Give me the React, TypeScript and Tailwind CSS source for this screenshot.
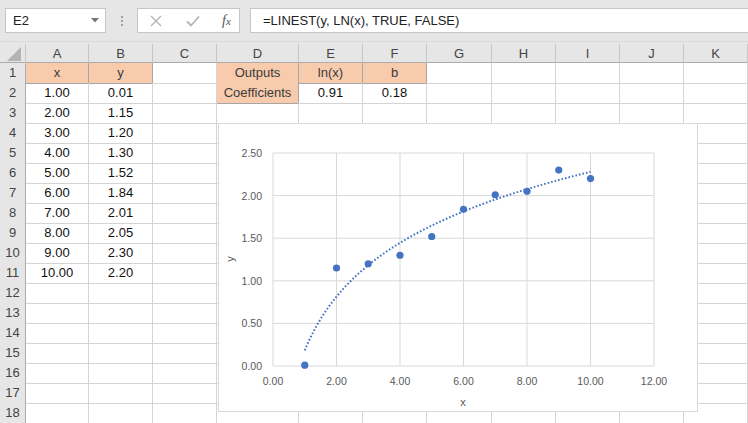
import React from "react";

const COLS = ["A", "B", "C", "D", "E", "F", "G", "H", "I", "J", "K"];
const GRID = "grid grid-cols-[26px_63px_64px_64px_82px_64px_64px_65px_64px_64px_64px_64px]";

type Cell = { t: string; o?: boolean };
const xs = ["1.00", "2.00", "3.00", "4.00", "5.00", "6.00", "7.00", "8.00", "9.00", "10.00"];
const ys = ["0.01", "1.15", "1.20", "1.30", "1.52", "1.84", "2.01", "2.05", "2.30", "2.20"];

function rowData(r: number): Record<number, Cell> {
  const d: Record<number, Cell> = {};
  if (r === 1) {
    d[0] = { t: "x", o: true };
    d[1] = { t: "y", o: true };
    d[3] = { t: "Outputs", o: true };
    d[4] = { t: "ln(x)", o: true };
    d[5] = { t: "b", o: true };
  } else if (r >= 2 && r <= 11) {
    d[0] = { t: xs[r - 2] };
    d[1] = { t: ys[r - 2] };
    if (r === 2) {
      d[3] = { t: "Coefficients", o: true };
      d[4] = { t: "0.91" };
      d[5] = { t: "0.18" };
    }
  }
  return d;
}

const yv = [0.01, 1.15, 1.2, 1.3, 1.52, 1.84, 2.01, 2.05, 2.3, 2.2];
const px = (x: number) => 272 + x * 31.75;
const py = (y: number) => 365 - y * 85.2;

function Chart() {
  const trend: string[] = [];
  for (let i = 0; i <= 90; i++) {
    const x = 1 + (i * 9) / 90;
    const y = 0.91 * Math.log(x) + 0.1835;
    trend.push(`${i === 0 ? "M" : "L"}${px(x).toFixed(2)},${py(y).toFixed(2)}`);
  }
  const hy = [0, 0.5, 1, 1.5, 2, 2.5];
  const vx = [0, 2, 4, 6, 8, 10, 12];
  return (
    <div className="absolute left-[218px] top-[123px] w-[480px] h-[289px] bg-white border border-[#d9d9d9]">
      <svg width="480" height="289" viewBox="218 123 480 289" className="block">
        {hy.map((v) => (
          <line key={"h" + v} x1={272} x2={653} y1={py(v)} y2={py(v)} stroke="#d9d9d9" strokeWidth={1} />
        ))}
        {vx.map((v) => (
          <line key={"v" + v} x1={px(v)} x2={px(v)} y1={152} y2={365} stroke="#d9d9d9" strokeWidth={1} />
        ))}
        {hy.map((v) => (
          <text key={"yl" + v} x={261} y={py(v) + 4} textAnchor="end" fontSize="10.5" fill="#595959" fontFamily="'Liberation Sans', Arial, sans-serif">
            {v.toFixed(2)}
          </text>
        ))}
        {vx.map((v) => (
          <text key={"xl" + v} x={px(v)} y={384} textAnchor="middle" fontSize="10.5" fill="#595959" fontFamily="'Liberation Sans', Arial, sans-serif">
            {v.toFixed(2)}
          </text>
        ))}
        <text x={462} y={405} textAnchor="middle" fontSize="11" fill="#595959" fontFamily="'Liberation Sans', Arial, sans-serif">x</text>
        <text x={233} y={258} textAnchor="middle" fontSize="11" fill="#595959" fontFamily="'Liberation Sans', Arial, sans-serif" transform="rotate(-90 233 258)">y</text>
        <path d={trend.join(" ")} fill="none" stroke="#4472c4" strokeWidth={2} strokeDasharray="1.6 2" />
        {yv.map((y, i) => (
          <circle key={i} cx={px(i + 1)} cy={py(y)} r={3.6} fill="#4472c4" />
        ))}
      </svg>
    </div>
  );
}

export default function App() {
  const rows = Array.from({ length: 18 }, (_, i) => i + 1);
  return (
    <div className="relative w-[748px] h-[423px] overflow-hidden bg-white text-[13px] text-[#222]" style={{ fontFamily: "'Liberation Sans', Arial, sans-serif" }}>
      {/* Formula bar */}
      <div className="h-[42px] bg-[#e6e6e6] flex items-start pt-[8px] border-b border-[#dadada]">
        <div className="ml-[5px] w-[101px] h-[25px] bg-white border border-[#c6c6c6] flex items-center justify-between pl-[7px] pr-[6px]">
          <span className="text-[13px] text-[#222]">E2</span>
          <svg width="8" height="5" viewBox="0 0 8 5"><path d="M0 0 L8 0 L4 4.5 Z" fill="#777" /></svg>
        </div>
        <div className="w-[31px] h-[25px] flex flex-col items-center justify-center gap-[2px]">
          <span className="w-[2px] h-[2px] bg-[#a0a0a0]" />
          <span className="w-[2px] h-[2px] bg-[#a0a0a0]" />
          <span className="w-[2px] h-[2px] bg-[#a0a0a0]" />
        </div>
        <div className="w-[103px] h-[25px] bg-white border border-[#c6c6c6] flex items-center">
          <svg width="12" height="12" viewBox="0 0 12 12" className="ml-[12px]">
            <path d="M1 1 L11 11 M11 1 L1 11" stroke="#b3b3b3" strokeWidth="1.3" />
          </svg>
          <svg width="14" height="12" viewBox="0 0 14 12" className="ml-[24px]">
            <path d="M1 6.5 L5 10.5 L13 1.5" stroke="#b3b3b3" strokeWidth="1.8" fill="none" />
          </svg>
          <span className="ml-[22px] text-[14px] italic text-[#555]" style={{ fontFamily: "'Liberation Serif', 'Times New Roman', serif" }}>
            f<span className="text-[11px]">x</span>
          </span>
        </div>
        <div className="ml-[10px] flex-1 h-[25px] bg-white border border-[#c6c6c6] border-r-0 flex items-center pl-[12px]">
          <span className="text-[13px] text-[#222]">=LINEST(y, LN(x), TRUE, FALSE)</span>
        </div>
      </div>

      {/* Column headers */}
      <div className={`${GRID} h-[21px] bg-[#e6e6e6] border-b border-[#ababab]`}>
        <div className="relative border-r border-[#c6c6c6] mt-[2px]">
          <svg width="14" height="14" viewBox="0 0 14 14" className="absolute right-[4px] bottom-[3px]">
            <path d="M14 0 L14 14 L0 14 Z" fill="#b4b4b4" />
          </svg>
        </div>
        {COLS.map((c) => (
          <div key={c} className="border-r border-[#c6c6c6] mt-[2px] flex items-center justify-center text-[13px] text-[#444]">
            {c}
          </div>
        ))}
      </div>

      {/* Rows */}
      {rows.map((r) => {
        const d = rowData(r);
        return (
          <div key={r} className={`${GRID} h-[20px]`}>
            <div className="bg-[#e6e6e6] border-r border-[#ababab] border-b border-b-[#d0d0d0] flex items-center justify-center text-[13px] text-[#444]">
              {r}
            </div>
            {COLS.map((c, ci) => {
              const cell = d[ci];
              return (
                <div
                  key={c}
                  className={
                    cell?.o
                      ? "bg-[#f8cbad] border-r border-b border-[#a6a6a6] flex items-center justify-center text-[#3b3b3b] whitespace-nowrap"
                      : "border-r border-b border-[#d4d4d4] flex items-center justify-center text-[#111] whitespace-nowrap"
                  }
                >
                  {cell?.t ?? ""}
                </div>
              );
            })}
          </div>
        );
      })}

      <Chart />
    </div>
  );
}
